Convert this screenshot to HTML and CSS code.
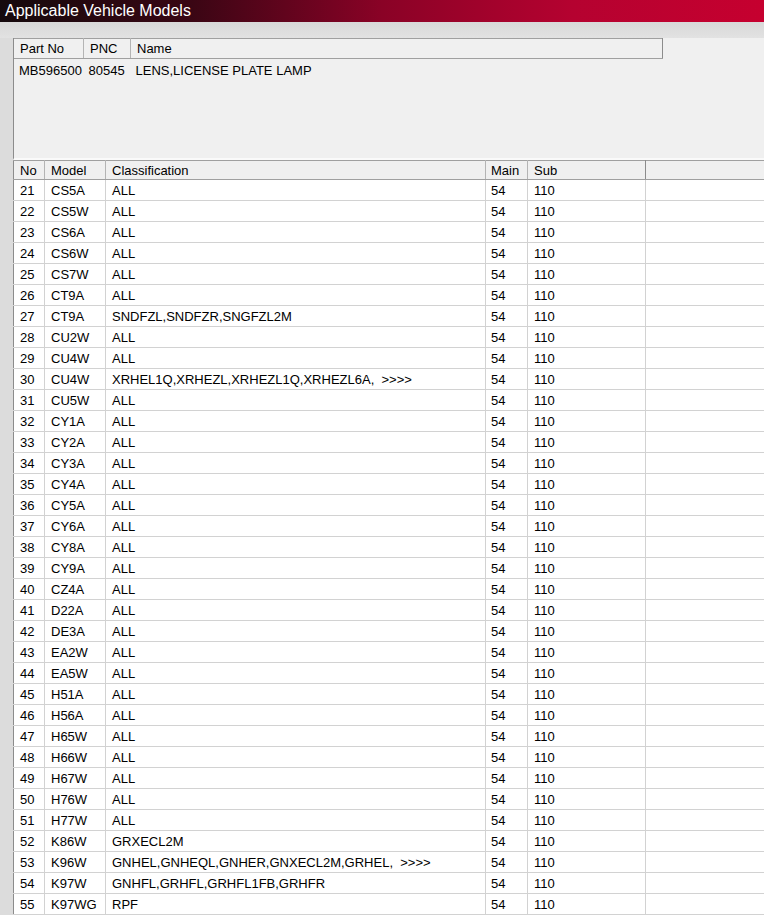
FILE: index.html
```html
<!DOCTYPE html>
<html lang="en">
<head>
  <meta charset="UTF-8">
  <title>Applicable Vehicle Models</title>
  <link rel="stylesheet" href="styles.css">
</head>
<body>
  <div class="title-bar">Applicable Vehicle Models</div>

  <div class="window-body">
    <div class="part-panel">
      <table class="part-table">
        <thead>
          <tr><th class="c-part">Part No</th><th class="c-pnc">PNC</th><th class="c-name">Name</th><th class="c-blank"></th></tr>
        </thead>
        <tbody>
          <tr><td>MB596500</td><td>80545</td><td>LENS,LICENSE PLATE LAMP</td><td></td></tr>
        </tbody>
      </table>
    </div>

    <table class="model-table">
      <thead>
        <tr>
          <th class="c-no">No</th>
          <th class="c-model">Model</th>
          <th class="c-class">Classification</th>
          <th class="c-main">Main</th>
          <th class="c-sub">Sub</th>
          <th class="c-fill"></th>
        </tr>
      </thead>
      <tbody id="model-rows"></tbody>
    </table>
  </div>

  <script src="app.js"></script>
</body>
</html>
```

FILE: styles.css
```css
body {
  margin: 0;
  width: 764px;
  height: 915px;
  overflow: hidden;
  font-family: "Liberation Sans", Arial, sans-serif;
  font-size: 13px;
  color: #000;
  background: #dcdcdc;
}

.title-bar {
  height: 22px;
  line-height: 22px;
  padding-left: 5px;
  color: #fff;
  font-size: 16px;
  background: linear-gradient(90deg, #150a0d 0%, #3a0614 25%, #8a0226 50%, #b50230 75%, #c6002f 100%);
}

.window-body {
  padding: 16px 0 0 13px;
  background: linear-gradient(180deg, #d8d8d8 0, #e2e2e2 16px, #dcdcdc 16px);
}

.part-panel {
  height: 120px;
  background: #f0f0f0;
  border-left: 1px solid #8c8c8c;
  border-bottom: 2px solid #fafafa;
}

.part-table,
.model-table {
  border-collapse: collapse;
  width: 751px;
  table-layout: fixed;
}

.part-table th,
.model-table th {
  font-weight: normal;
  text-align: left;
  height: 19px;
  padding: 0 0 0 6px;
  background: #f0f0f0;
  border-top: 1px solid #a0a0a0;
  border-bottom: 1px solid #a0a0a0;
  border-right: 1px solid #b4b4b4;
}

.part-table td {
  height: 22px;
  padding: 0 0 0 5px;
  white-space: nowrap;
}

.part-table .c-part { width: 63px; }
.part-table .c-pnc { width: 40px; }
.part-table .c-name { width: 525px; border-right-color: #8c8c8c; }
.part-table .c-blank { border: none; background: transparent; }

.model-table {
  border-left: 1px solid #8c8c8c;
}

.model-table th {
  height: 18px;
}

.model-table td {
  height: 20px;
  padding: 0 0 0 6px;
  background: #fff;
  border-bottom: 1px solid #d2d2d2;
  border-right: 1px solid #d2d2d2;
  white-space: nowrap;
  overflow: hidden;
}

.model-table .c-no { width: 24px; }
.model-table .c-model { width: 54px; }
.model-table .c-class { width: 373px; }
.model-table .c-main { width: 36px; padding-left: 5px; }
.model-table .c-sub { width: 111px; border-right-color: #8c8c8c; }
.model-table th.c-fill { border-right: none; }
.model-table td.main { padding-left: 5px; }
.model-table td:last-child { border-right: none; }
```

FILE: app.js
```js
const rows = [
  [21, "CS5A", "ALL"], [22, "CS5W", "ALL"], [23, "CS6A", "ALL"], [24, "CS6W", "ALL"],
  [25, "CS7W", "ALL"], [26, "CT9A", "ALL"], [27, "CT9A", "SNDFZL,SNDFZR,SNGFZL2M"],
  [28, "CU2W", "ALL"], [29, "CU4W", "ALL"],
  [30, "CU4W", "XRHEL1Q,XRHEZL,XRHEZL1Q,XRHEZL6A,  >>>>"],
  [31, "CU5W", "ALL"], [32, "CY1A", "ALL"], [33, "CY2A", "ALL"], [34, "CY3A", "ALL"],
  [35, "CY4A", "ALL"], [36, "CY5A", "ALL"], [37, "CY6A", "ALL"], [38, "CY8A", "ALL"],
  [39, "CY9A", "ALL"], [40, "CZ4A", "ALL"], [41, "D22A", "ALL"], [42, "DE3A", "ALL"],
  [43, "EA2W", "ALL"], [44, "EA5W", "ALL"], [45, "H51A", "ALL"], [46, "H56A", "ALL"],
  [47, "H65W", "ALL"], [48, "H66W", "ALL"], [49, "H67W", "ALL"], [50, "H76W", "ALL"],
  [51, "H77W", "ALL"], [52, "K86W", "GRXECL2M"],
  [53, "K96W", "GNHEL,GNHEQL,GNHER,GNXECL2M,GRHEL,  >>>>"],
  [54, "K97W", "GNHFL,GRHFL,GRHFL1FB,GRHFR"], [55, "K97WG", "RPF"]
];

const body = document.getElementById("model-rows");
rows.forEach(([no, model, cls]) => {
  const tr = document.createElement("tr");
  const cells = [no, model, cls.replace(/ /g, "\u00a0"), 54, 110, ""];
  cells.forEach((val, i) => {
    const td = document.createElement("td");
    td.textContent = val;
    if (i === 3) td.className = "main";
    tr.appendChild(td);
  });
  body.appendChild(tr);
});
```
